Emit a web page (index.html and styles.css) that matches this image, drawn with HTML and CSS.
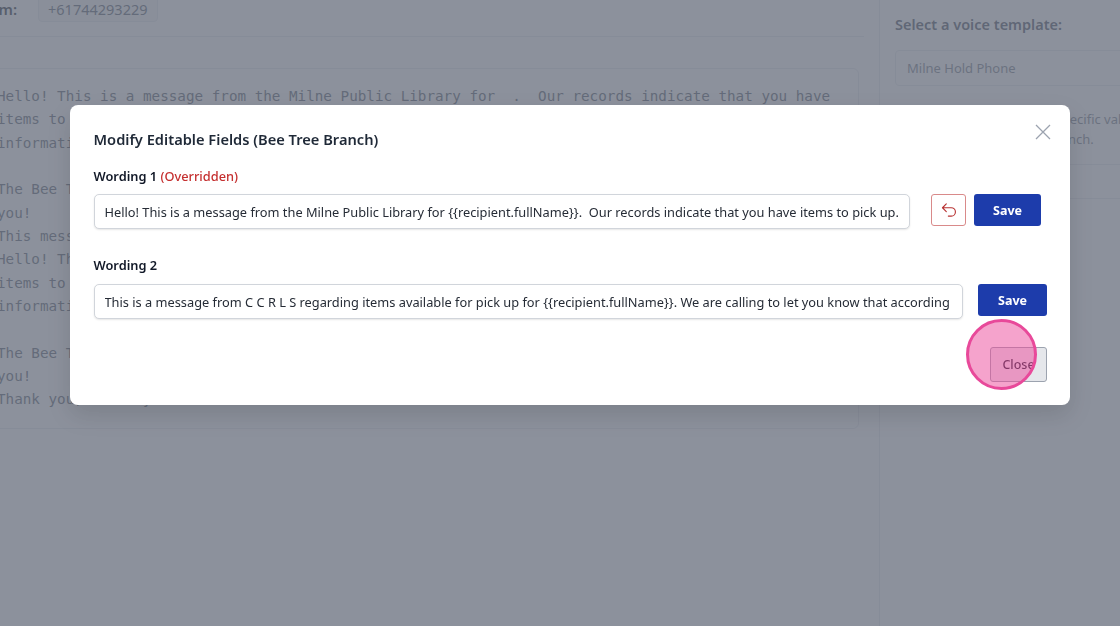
FILE: index.html
```html
<!DOCTYPE html>
<html lang="en">
<head>
<meta charset="utf-8">
<title>Modify Editable Fields</title>
<link rel="stylesheet" href="styles.css">
</head>
<body>
<div class="page">
  <main class="main">
    <div class="from-row">
      <span class="from-label">From:</span>
      <span class="from-chip">+61744293229</span>
    </div>
    <pre class="message">Hello! This is a message from the Milne Public Library for  .  Our records indicate that you have
items to pick up. Please call the library for more
information about your holds.

The Bee Tree Branch is open today. Thank
you!
This message will now repeat.
Hello! This is a message from the Milne Public Library for
items to pick up. Please call the library for more
information about your holds.

The Bee Tree Branch is open today. Thank
you!
Thank you, Library</pre>
  </main>
  <aside class="side">
    <div class="side-title">Select a voice template:</div>
    <div class="side-select">Milne Hold Phone</div>
    <p class="side-note">These fields may be given specific values<br>for this library or for this branch.</p>
    <div class="side-rule"></div>
  </aside>
</div>

<div class="overlay">
  <section class="modal">
    <header class="modal-head">
      <h2 class="modal-title">Modify Editable Fields (Bee Tree Branch)</h2>
      <button class="modal-x" aria-label="Close">
        <svg width="16" height="16" viewBox="0 0 16 16"><path d="M1 1 15 15M15 1 1 15" fill="none" stroke="currentColor" stroke-width="1.3"/></svg>
      </button>
    </header>
    <div class="field field-one">
      <label class="field-label">Wording 1 <span class="overridden">(Overridden)</span></label>
      <div class="field-row">
        <input class="field-input" type="text" value="Hello! This is a message from the Milne Public Library for {{recipient.fullName}}.  Our records indicate that you have items to pick up.">
        <button class="undo" aria-label="Revert">
          <svg width="18" height="18" viewBox="0 0 16 16"><path d="M5.6 2.6 2.2 6l3.4 3.4M2.4 6h7.6a3.7 3.7 0 0 1 0 7.4H7.4" fill="none" stroke="currentColor" stroke-width="1" stroke-linecap="round" stroke-linejoin="round"/></svg>
        </button>
        <button class="save">Save</button>
      </div>
    </div>
    <div class="field field-two">
      <label class="field-label">Wording 2</label>
      <div class="field-row">
        <input class="field-input" type="text" value="This is a message from C C R L S regarding items available for pick up for {{recipient.fullName}}. We are calling to let you know that according to our records you have items">
        <button class="save save-two">Save</button>
      </div>
    </div>
    <footer class="modal-foot">
      <button class="close">Close</button>
    </footer>
    <div class="click-marker"></div>
  </section>
</div>
</body>
</html>
```
FILE: styles.css
```css
* { box-sizing: border-box; }
html, body { margin: 0; height: 100%; overflow: hidden; background: #fff; }
body { font-family: "Noto Sans", "Open Sans", sans-serif; color: #111827; }

.page { display: flex; height: 660px; margin-top: -16px; margin-left: -28px; width: 1240px; }
.main { width: 907px; flex: none; padding-right: 15px; }
.from-row { display: flex; align-items: center; height: 53px; padding: 12px 0 15px 0; border-bottom: 1px solid #e5e7eb; font-size: 15px; }
.from-label { font-weight: 600; width: 66px; flex: none; padding-left: 3px; }
.from-chip { padding: 2px 9px; border: 1px solid #e5e7eb; border-radius: 4px; background: #f3f4f6; color: #4b5563; font-size: 14.5px; line-height: 20px; }
.message { margin: 31px 5px 0 0; height: 361px; padding: 16px 0 0 24px; border: 1px solid #e5e7eb; border-radius: 6px; background: #fff; font-family: "DejaVu Sans Mono", monospace; font-size: 14.27px; line-height: 23.35px; color: #4b5563; overflow: hidden; }

.side { flex: 1; border-left: 1px solid #e5e7eb; padding: 31px 0 0 15px; }
.side-title { font-size: 14.5px; font-weight: 600; line-height: 18px; color: #374151; }
.side-select { margin-top: 17px; height: 36px; padding: 0 11px; line-height: 34px; border: 1px solid #e5e7eb; border-radius: 4px; font-size: 13px; color: #6b7280; }
.side-note { margin: 23px 0 0; font-size: 13px; line-height: 20px; color: #6b7280; white-space: nowrap; }
.side-rule { height: 35px; margin-top: 15px; border-top: 1px solid #e5e7eb; border-bottom: 1px solid #e5e7eb; }

.overlay { position: fixed; inset: 0; background: rgba(107, 114, 128, .78); }
.modal { position: absolute; left: 70px; top: 105px; width: 1000px; height: 300px; padding: 24px 23px 0 23.5px; background: #fff; border-radius: 8px; box-shadow: 0 10px 25px rgba(0, 0, 0, .12); }
.modal-head { display: flex; justify-content: space-between; align-items: flex-start; }
.modal-title { margin: 0; font-size: 14.65px; line-height: 20px; font-weight: 600; color: #1f2937; }
.modal-x { border: 0; background: none; padding: 0; margin: -5px 0 0; color: #9ca3af; line-height: 0; height: 16px; transform: translateX(4px); }

.field-one { margin-top: 18px; }
.field-two { margin-top: 27px; }
.field-two .field-label { margin-bottom: 10px; }
.field-label { display: block; font-size: 12.8px; line-height: 18px; font-weight: 600; color: #111827; margin-bottom: 9px; }
.overridden { color: #c53030; font-weight: 500; }
.field-row { display: flex; align-items: flex-start; }
.field-input { flex: 1; min-width: 0; height: 35px; padding: 0 10px; border: 1px solid #d1d5db; border-radius: 5px; box-shadow: 0 1px 2px rgba(0, 0, 0, .1); font: 12.8px "Noto Sans", sans-serif; color: #262c36; outline: none; }
.undo { width: 35px; height: 32px; margin-left: 21px; border: 1px solid #d98a8a; border-radius: 3px; background: #fff; color: #b83232; padding: 0; display: flex; align-items: center; justify-content: center; }
.save { width: 67px; height: 32px; margin: 0 6px 0 8px; border: 0; border-radius: 3px; background: #1d3cab; color: #fff; font: 700 12.5px "Noto Sans", sans-serif; }
.save-two { width: 69px; margin: 0 0 0 15px; }
.modal-foot { display: flex; justify-content: flex-end; margin-top: 28px; }
.close { width: 57px; height: 35px; border: 1px solid #9ca3af; border-radius: 3px; background: #e5e7eb; color: #1f2937; font: 500 12.5px "Noto Sans", sans-serif; padding: 0; }
.click-marker { position: absolute; left: 896px; top: 214px; width: 71px; height: 71px; border: 3px solid #e8499a; border-radius: 50%; background: rgba(236, 72, 153, .5); }
```
